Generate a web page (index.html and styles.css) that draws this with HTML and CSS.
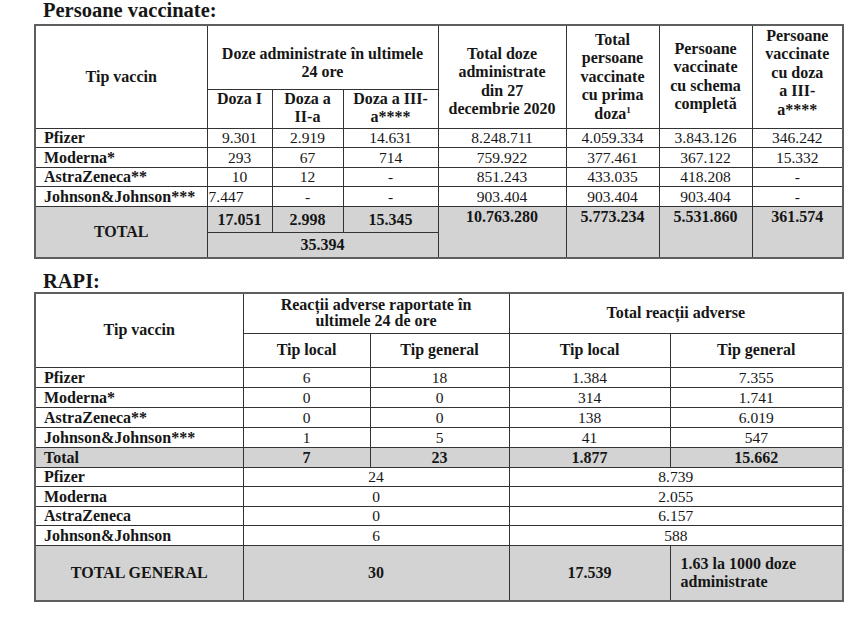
FILE: index.html
```html
<!DOCTYPE html>
<html lang="ro">
<head>
<meta charset="utf-8">
<title>Persoane vaccinate</title>
<link rel="stylesheet" href="styles.css">
</head>
<body>
<main class="page">
  <h2 class="title">Persoane vaccinate:</h2>
  <table class="grid vacc">
    <colgroup>
      <col class="v1"><col class="v2"><col class="v3"><col class="v4"><col class="v5"><col class="v6"><col class="v7"><col class="v8">
    </colgroup>
    <tr class="vh1">
      <th rowspan="2">Tip vaccin</th>
      <th colspan="3" class="grp">Doze administrate în ultimele<br>24 ore</th>
      <th rowspan="2" class="low">Total doze<br>administrate<br>din 27<br>decembrie 2020</th>
      <th rowspan="2">Total<br>persoane<br>vaccinate<br>cu prima<br>doza<sup>1</sup></th>
      <th rowspan="2">Persoane<br>vaccinate<br>cu schema<br>completă</th>
      <th rowspan="2" class="high">Persoane<br>vaccinate<br>cu doza<br>a III-<br>a****</th>
    </tr>
    <tr class="vh2">
      <th class="top">Doza I</th>
      <th class="top">Doza a<br>II-a</th>
      <th class="top">Doza a III-<br>a****</th>
    </tr>
    <tr class="row">
      <th class="nm">Pfizer</th><td>9.301</td><td>2.919</td><td>14.631</td><td>8.248.711</td><td>4.059.334</td><td>3.843.126</td><td>346.242</td>
    </tr>
    <tr class="row">
      <th class="nm">Moderna*</th><td>293</td><td>67</td><td>714</td><td>759.922</td><td>377.461</td><td>367.122</td><td>15.332</td>
    </tr>
    <tr class="row">
      <th class="nm">AstraZeneca**</th><td>10</td><td>12</td><td>-</td><td>851.243</td><td>433.035</td><td>418.208</td><td>-</td>
    </tr>
    <tr class="row">
      <th class="nm">Johnson&amp;Johnson***</th><td class="lft">7.447</td><td>-</td><td>-</td><td>903.404</td><td>903.404</td><td>903.404</td><td>-</td>
    </tr>
    <tr class="tot tr1">
      <th rowspan="2">TOTAL</th><td>17.051</td><td>2.998</td><td>15.345</td>
      <td rowspan="2" class="top">10.763.280</td><td rowspan="2" class="top">5.773.234</td><td rowspan="2" class="top">5.531.860</td><td rowspan="2" class="top">361.574</td>
    </tr>
    <tr class="tot tr2">
      <td colspan="3">35.394</td>
    </tr>
  </table>

  <h2 class="title second">RAPI:</h2>
  <table class="grid rapi">
    <colgroup>
      <col class="r1"><col class="r2"><col class="r3"><col class="r4"><col class="r5">
    </colgroup>
    <tr class="rh1">
      <th rowspan="2">Tip vaccin</th>
      <th colspan="2" class="tight">Reacții adverse raportate în<br>ultimele 24 de ore</th>
      <th colspan="2">Total reacții adverse</th>
    </tr>
    <tr class="rh2">
      <th>Tip local</th><th>Tip general</th><th>Tip local</th><th>Tip general</th>
    </tr>
    <tr class="row20"><th class="nm">Pfizer</th><td>6</td><td>18</td><td>1.384</td><td>7.355</td></tr>
    <tr class="row20"><th class="nm">Moderna*</th><td>0</td><td>0</td><td>314</td><td>1.741</td></tr>
    <tr class="row20"><th class="nm">AstraZeneca**</th><td>0</td><td>0</td><td>138</td><td>6.019</td></tr>
    <tr class="row20"><th class="nm">Johnson&amp;Johnson***</th><td>1</td><td>5</td><td>41</td><td>547</td></tr>
    <tr class="row20 tot"><th class="nm">Total</th><td>7</td><td>23</td><td>1.877</td><td>15.662</td></tr>
    <tr class="row"><th class="nm">Pfizer</th><td colspan="2">24</td><td colspan="2">8.739</td></tr>
    <tr class="row"><th class="nm">Moderna</th><td colspan="2">0</td><td colspan="2">2.055</td></tr>
    <tr class="row"><th class="nm">AstraZeneca</th><td colspan="2">0</td><td colspan="2">6.157</td></tr>
    <tr class="row"><th class="nm">Johnson&amp;Johnson</th><td colspan="2">6</td><td colspan="2">588</td></tr>
    <tr class="tot gen">
      <th>TOTAL GENERAL</th><td colspan="2">30</td><td>17.539</td><td class="note">1.63 la 1000 doze administrate</td>
    </tr>
  </table>
</main>
</body>
</html>
```
FILE: styles.css
```css
* { box-sizing: border-box; }

body {
  margin: 0;
  background: #fff;
  color: #161616;
  font-family: "Liberation Serif", "Times New Roman", serif;
}

.page {
  padding: 0 0 0 34px;
}

.title {
  font-size: 20.5px;
  line-height: 20px;
  font-weight: bold;
  margin: 0 0 4px 9px;
}

.title.second {
  margin-top: 12px;
  margin-bottom: 1px;
}

.grid {
  border-collapse: collapse;
  table-layout: fixed;
  width: 808px;
  border: 2px solid #5e5e5e;
  font-size: 15.5px;
  line-height: 17px;
}

.grid th,
.grid td {
  border: 1px solid #333;
  padding: 0 3px;
  text-align: center;
  vertical-align: middle;
}

.grid th { font-weight: bold; font-size: 16px; line-height: 18.5px; }
.grid td { font-weight: normal; }

.grid sup { font-size: 9px; line-height: 0; vertical-align: 6px; }

.grid .nm {
  text-align: left;
  padding-left: 8px;
  line-height: 17px;
}

.grid .top { vertical-align: top; }
.grid .lft { text-align: left; padding-left: 1px; }
.grid .low { padding-top: 10px; }
.grid .high { padding-bottom: 8px; }
.grid .grp { padding-top: 12px; }
.grid .tight { line-height: 16px; }

/* vaccine table columns */
.v1 { width: 172px; }
.v2 { width: 65px; }
.v3 { width: 71px; }
.v4 { width: 95px; }
.v5 { width: 128px; }
.v6 { width: 93px; }
.v7 { width: 93px; }
.v8 { width: 91px; }

.vh1 { height: 64px; }
.vh2 { height: 39px; }
.row { height: 19.5px; }
.row20 { height: 20px; }

.vh2 th { padding-top: 0; }

.tot th,
.tot td {
  background: #d3d3d3;
  font-weight: bold;
  font-size: 16px;
}

.tr1 { height: 26px; }
.tr2 { height: 26px; }
.tr1 .top { padding-top: 1px; }

/* RAPI table columns */
.r1 { width: 208px; }
.r2 { width: 127px; }
.r3 { width: 139px; }
.r4 { width: 161px; }
.r5 { width: 173px; }

.rh1 { height: 40px; }
.rh2 { height: 34px; }

.gen { height: 56px; }
.grid .note {
  text-align: left;
  padding-left: 10px;
  line-height: 18px;
}
```
